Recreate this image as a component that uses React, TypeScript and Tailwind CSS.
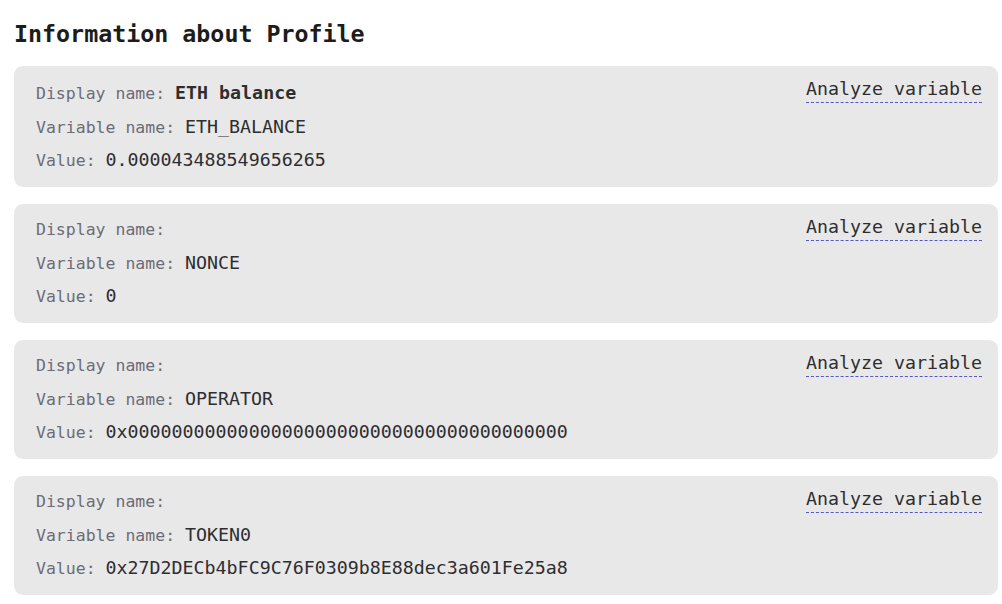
import React from 'react';

type Variable = {
    displayName: string;
    name: string;
    value: string;
};

const variables: Variable[] = [
    { displayName: 'ETH balance', name: 'ETH_BALANCE', value: '0.000043488549656265' },
    { displayName: '', name: 'NONCE', value: '0' },
    { displayName: '', name: 'OPERATOR', value: '0x0000000000000000000000000000000000000000' },
    { displayName: '', name: 'TOKEN0', value: '0x27D2DECb4bFC9C76F0309b8E88dec3a601Fe25a8' },
];

const Row: React.FC<{ label: string; children?: React.ReactNode; tall?: boolean }> = ({ label, children, tall }) => (
    <div className={`flex items-baseline whitespace-pre ${tall ? 'h-[35px] pt-[1px]' : 'h-[33px]'}`}>
        <span className="text-[16.5px] leading-[33px] text-[#6c6c76]">{label} </span>
        <span className="text-[18.3px] leading-[33px] text-[#2e2e30]">{children}</span>
    </div>
);

const VariableCard: React.FC<{ item: Variable }> = ({ item }) => (
    <div className="flex justify-between rounded-[9px] bg-[#e8e8e8] pl-[22px] pr-[16px] pt-[9px] pb-[11px]">
        <div>
            <Row label="Display name:" tall={!!item.displayName}>
                {item.displayName && <b className="font-bold">{item.displayName}</b>}
            </Row>
            <Row label="Variable name:">{item.name}</Row>
            <Row label="Value:">{item.value}</Row>
        </div>
        <div>
            <span className="block text-[18.3px] leading-[27px] text-[#2e2e30] border-b border-dashed border-[#5a56c4] cursor-pointer">
                Analyze variable
            </span>
        </div>
    </div>
);

export default function App() {
    return (
        <div className="min-h-[604px] bg-white px-[14px] pr-[4px] font-['DejaVu_Sans_Mono',monospace]">
            <h2 className="pt-[20px] mb-[18px] text-[23.3px] leading-[28px] font-bold text-[#1c1c1c]">
                Information about Profile
            </h2>
            <div className="flex flex-col gap-[17px]">
                {variables.map((v) => (
                    <VariableCard key={v.name} item={v} />
                ))}
            </div>
        </div>
    );
}
